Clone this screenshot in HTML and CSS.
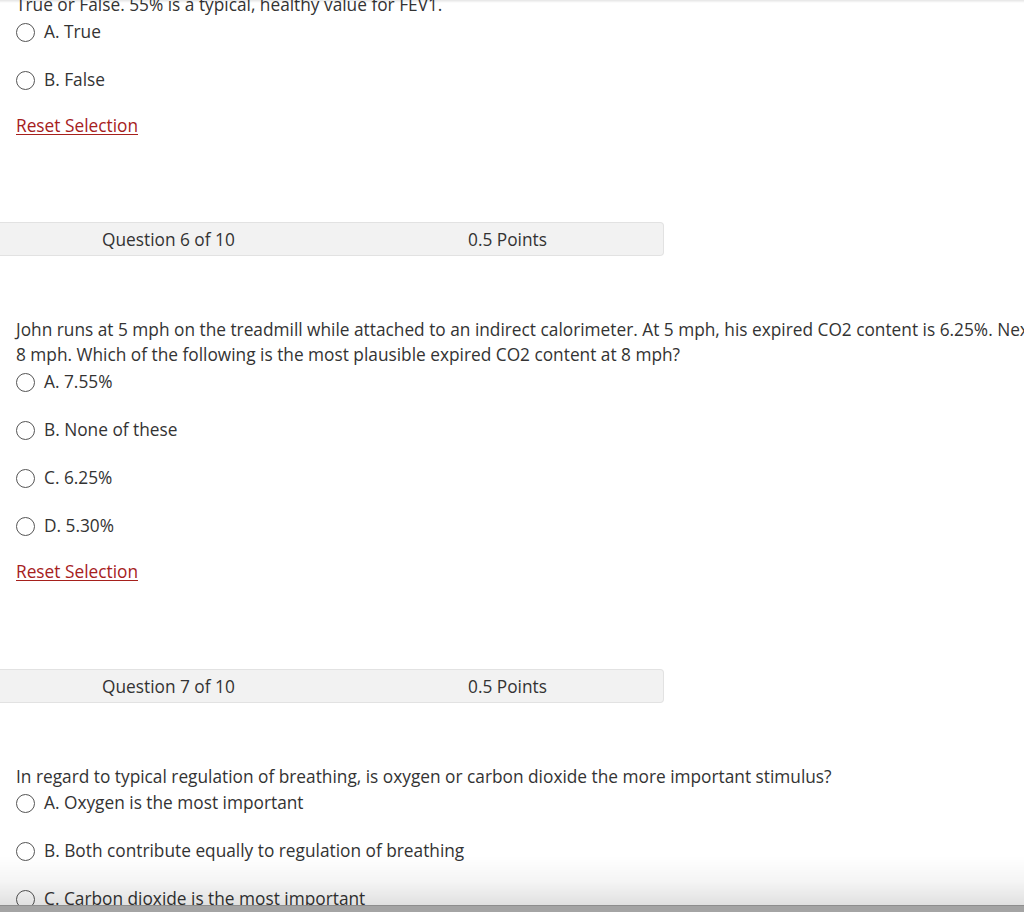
FILE: index.html
```html
<!DOCTYPE html>
<html lang="en">
<head>
<meta charset="utf-8">
<title>Quiz</title>
<link rel="stylesheet" href="styles.css">
</head>
<body>
<div class="topshade"></div>
<main class="quiz">
  <section class="question first">
    <p class="prompt">True or False. 55% is a typical, healthy value for FEV1.</p>
    <ul class="options">
      <li class="option"><span class="radio"></span><span>A. True</span></li>
      <li class="option"><span class="radio"></span><span>B. False</span></li>
    </ul>
    <a class="reset" href="#">Reset Selection</a>
  </section>

  <div class="qhead"><span class="qnum">Question 6 of 10</span><span class="qpts">0.5 Points</span></div>

  <section class="question">
    <p class="prompt">John runs at 5 mph on the treadmill while attached to an indirect calorimeter. At 5 mph, his expired CO2 content is 6.25%. Next, he increases the speed to<br>8 mph. Which of the following is the most plausible expired CO2 content at 8 mph?</p>
    <ul class="options">
      <li class="option"><span class="radio"></span><span>A. 7.55%</span></li>
      <li class="option"><span class="radio"></span><span>B. None of these</span></li>
      <li class="option"><span class="radio"></span><span>C. 6.25%</span></li>
      <li class="option"><span class="radio"></span><span>D. 5.30%</span></li>
    </ul>
    <a class="reset" href="#">Reset Selection</a>
  </section>

  <div class="qhead"><span class="qnum">Question 7 of 10</span><span class="qpts">0.5 Points</span></div>

  <section class="question last">
    <p class="prompt">In regard to typical regulation of breathing, is oxygen or carbon dioxide the more important stimulus?</p>
    <ul class="options">
      <li class="option"><span class="radio"></span><span>A. Oxygen is the most important</span></li>
      <li class="option"><span class="radio"></span><span>B. Both contribute equally to regulation of breathing</span></li>
      <li class="option"><span class="radio"></span><span>C. Carbon dioxide is the most important</span></li>
    </ul>
  </section>
</main>
<div class="bottomfade"></div>
<div class="bottombar"></div>
</body>
</html>
```

FILE: styles.css
```css
html, body {
  margin: 0;
  padding: 0;
  overflow: hidden;
  background: #ffffff;
}

body {
  font-family: "Open Sans", "Liberation Sans", sans-serif;
  font-size: 17.3px;
  color: #333333;
  width: 1024px;
  height: 912px;
}

.quiz {
  margin-top: -8px;
  display: flex;
  flex-direction: column;
}

.question {
  padding-left: 16px;
  display: flex;
  flex-direction: column;
  align-items: flex-start;
}

.prompt {
  margin: 0 0 3px 0;
  line-height: 25px;
  white-space: nowrap;
}

.last .prompt {
  margin-bottom: 2px;
}

.options {
  list-style: none;
  margin: 0;
  padding: 0;
  display: flex;
  flex-direction: column;
  gap: 24px;
}

.option {
  height: 24px;
  display: flex;
  align-items: center;
  gap: 9px;
  line-height: 24px;
}

.radio {
  width: 17px;
  height: 17px;
  border: 1.4px solid #555555;
  border-radius: 50%;
  box-sizing: content-box;
  flex: none;
}

.reset {
  margin-top: 22px;
  line-height: 24px;
  color: #a6201c;
  text-decoration: underline;
  text-underline-offset: 2px;
}

.qhead {
  margin-top: 84px;
  margin-bottom: 61px;
  box-sizing: border-box;
  width: 664px;
  height: 34px;
  background: #f2f2f2;
  border: 1px solid #e2e2e2;
  border-left: none;
  border-radius: 0 4px 4px 0;
  display: flex;
  align-items: center;
  padding-left: 102px;
}

.qhead ~ .qhead {
  margin-top: 85px;
}

.qnum {
  width: 366px;
}

.topshade {
  position: fixed;
  top: 0;
  left: 0;
  right: 0;
  height: 3px;
  background: linear-gradient(to bottom, rgba(0,0,0,0.10), rgba(0,0,0,0));
  z-index: 2;
}

.bottomfade {
  position: fixed;
  left: 0;
  right: 0;
  bottom: 6px;
  height: 50px;
  background: linear-gradient(to bottom, rgba(0,0,0,0), rgba(0,0,0,0.04) 50%, rgba(0,0,0,0.12));
  z-index: 2;
}

.bottombar {
  position: fixed;
  left: 0;
  right: 0;
  bottom: 0;
  height: 6px;
  background: #a4a4a4;
  border-top: 1px solid #8e8e8e;
  z-index: 3;
}
```
